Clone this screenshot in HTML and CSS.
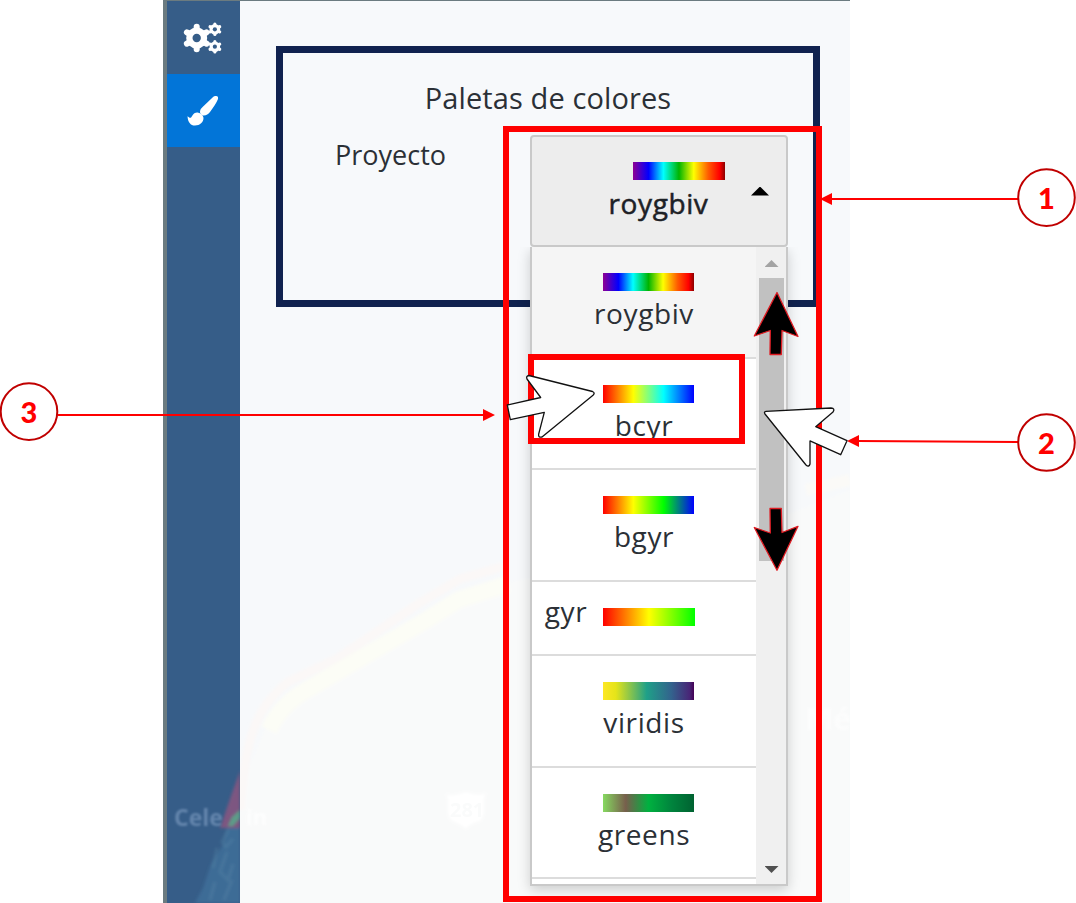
FILE: index.html
```html
<!DOCTYPE html>
<html lang="es">
<head>
<meta charset="utf-8">
<title>Paletas de colores</title>
<link rel="stylesheet" href="styles.css">
</head>
<body>
<main class="app">
  <nav class="sidebar">
    <svg class="side-map" viewBox="0 0 73 163">
      <defs><filter id="soft"><feGaussianBlur stdDeviation="1.5"/></filter></defs>
      <g filter="url(#soft)">
        <path d="M73 86 60 88 56 105 44 124 36 148 28 163H73z" fill="#3e6c96"/>
        <path d="M61 90l-6 12 4 5 7-8M50 108l-4 20M60 112l-7 20 8 8 5-16M48 142l-5 18M65 140l-8 20" fill="none" stroke="#5589aa" stroke-width="3" opacity=".35"/>
        <path d="M73 31 65 53 53 88H73z" fill="#7d5681"/>
        <path d="M73 70l-8 7-4 9h5l7-8z" fill="#5c9c88"/>
      </g>
      <text class="side-place" x="7" y="86">Cele</text>
    </svg>
    <a class="tool" aria-label="Ajustes">
      <svg width="42" height="34" viewBox="0 0 40 32">
        <g fill="#fff">
          <circle cx="14" cy="16" r="10"/>
          <g stroke="#fff" stroke-width="5.8" stroke-linecap="round"><path d="M14 5.3v21.4M4.7 10.6l18.6 10.8M4.7 21.4l18.6-10.8"/></g>
          <circle cx="31.3" cy="7.7" r="5"/>
          <g stroke="#fff" stroke-width="3" stroke-linecap="round"><path d="M31.3 2.7v10M26.7 5.3l9.2 4.8M26.7 10.1l9.2-4.8"/></g>
          <circle cx="31.3" cy="24.3" r="5"/>
          <g stroke="#fff" stroke-width="3" stroke-linecap="round"><path d="M31.3 19.3v10M26.7 21.9l9.2 4.8M26.7 26.7l9.2-4.8"/></g>
        </g>
        <g fill="#365d88"><circle cx="14" cy="16" r="4"/><circle cx="31.3" cy="7.7" r="2"/><circle cx="31.3" cy="24.3" r="2"/></g>
      </svg>
    </a>
    <a class="tool tool-active" aria-label="Paletas">
      <svg width="32" height="32" viewBox="0 0 32 32">
        <g fill="#fff">
          <path d="M29 1c2 0 2.500 1.700 1.800 3.500C29.500 8 26 13 23 17c-1.800 2.300-3.500 3.500-6.200 3.500-2.300 0-4.200-2-3.700-4.500.3-1.700 1.200-2.600 2.500-3.900L25.300 2.700C26.800 1.300 27.800 1 29 1z"/>
          <path d="M10.500 17.500c2 .2 6 2.700 6 5.500 0 4.200-3.600 7.500-8.500 7.500C3.500 30.500.8 27 .5 21.200c1.300 1 2.500 2.300 3.600 1.300 1.600-2 2.700-5.300 6.400-5z"/>
        </g>
      </svg>
    </a>
  </nav>

  <section class="panel">
    <svg class="map" viewBox="0 0 610 903">
      <defs><filter id="haze"><feGaussianBlur stdDeviation="1.5"/></filter></defs>
      <g filter="url(#haze)">
        <path d="M0 903V790L25 730 55 700 130 655 220 597 265 583 470 545 610 490V903z" fill="#f9fafa"/>
        <path d="M0 810C5 740 15 708 48 682L98 658 178 604 220 579 265 566" fill="none" stroke="#fbf8f7" stroke-width="9"/>
        <path d="M29 730C38 710 55 696 70 688L140 647 188 619 218 600 268 584" fill="none" stroke="#fcfdf6" stroke-width="17"/>
        <path d="M566 490 610 480" stroke="#fbfaf7" stroke-width="12"/>
        <path d="M206 794q6 3 20-2 13 5 20 1c-5 9 2 20-6 28-7 2-11 4-14 8-5-5-11-6-15-9-6-8 0-18-5-26z" fill="#fff"/>
      </g>
      <text class="place" x="6" y="825">in</text>
      <text class="place place-big" x="565" y="730">Mé</text>
      <text class="shield" x="210" y="817">281</text>
    </svg>
    <div class="card">
      <h1 class="title">Paletas de colores</h1>
      <div class="field">
        <span class="field-label">Proyecto</span>
        <div class="select">
          <div class="select-box">
            <i class="ramp roygbiv"></i>
            <span class="label">roygbiv</span>
            <i class="caret"></i>
          </div>
          <div class="menu">
            <ul class="options">
              <li class="option option-first"><i class="ramp roygbiv"></i><span class="label">roygbiv</span></li>
              <li class="option"><i class="ramp bcyr"></i><span class="label">bcyr</span></li>
              <li class="option option-tall"><i class="ramp bgyr"></i><span class="label">bgyr</span></li>
              <li class="option option-inline"><span class="label">gyr</span><i class="ramp gyr"></i></li>
              <li class="option option-tall"><i class="ramp viridis"></i><span class="label">viridis</span></li>
              <li class="option"><i class="ramp greens"></i><span class="label">greens</span></li>
            </ul>
            <div class="scrollbar"><i class="up"></i><div class="thumb"></div><i class="down"></i></div>
          </div>
        </div>
      </div>
    </div>
  </section>
</main>

<svg class="notes" width="1076" height="903" viewBox="0 0 1076 903">
  <g fill="none" stroke="#f00" stroke-width="6">
    <rect x="506" y="129" width="313" height="770"/>
    <rect x="531" y="357" width="211" height="84"/>
  </g>
  <g stroke="#f00" stroke-width="2"><path d="M830 199H1018M858 441L1018 442M58 415H484"/></g>
  <g fill="#f00"><path d="M820 199l12-6v12zM847 441l12-6v12zM495 415l-12-6v12z"/></g>
  <g fill="#000" stroke="#e01b22" stroke-width="1.300" stroke-linejoin="round">
    <path d="M777 292.500 798 336.500 782 330.500 781.300 354.500H770L770.300 330.500 754.300 336z"/>
    <path d="M770 508.500H781.300L782 532.500 798 526.300 777 570.300 754.300 527.500 770.300 533z"/>
  </g>
  <g fill="#fff" stroke="#111" stroke-width="1.300" stroke-linejoin="round">
    <path d="M592.500 391.500Q595.500 393 593 395.200L542 437Q538 438 538.700 434L544.300 412.300 510.300 419.700 507.300 405 540.700 397.500 527 379Q525.800 376 529 375.500z"/>
    <path d="M766 411.300 831 408Q835.500 408.500 833 412L815.700 426.700 847 440.700 840.700 454.700 810 440.900V464Q809 467.500 806 465L765 414Q763.500 412 766 411.300z"/>
  </g>
  <g fill="#fff" stroke="#c00000" stroke-width="2">
    <circle cx="1046.500" cy="197.600" r="28.300"/><circle cx="1046.500" cy="442.500" r="28.300"/><circle cx="29" cy="411.600" r="28.300"/>
  </g>
  <g class="num"><text x="1046.500" y="208.500">1</text><text x="1046.500" y="453.500">2</text><text x="29" y="422.500">3</text></g>
</svg>
</body>
</html>
```

FILE: styles.css
```css
* { box-sizing: border-box; }
body {
  margin: 0;
  position: relative;
  width: 1076px;
  height: 903px;
  overflow: hidden;
  background: #fff;
  color: #2b3036;
  font-family: "Open Sans", "Noto Sans", sans-serif;
}
.app {
  display: flex;
  width: 687px;
  height: 903px;
  margin-left: 163px;
  border-left: 4px solid #6b7b80;
  border-top: 1px solid #6b7b80;
}
.sidebar {
  position: relative;
  width: 73px;
  background: #365d88;
}
.side-map {
  position: absolute;
  left: 0;
  bottom: 0;
  width: 73px;
  height: 163px;
}
.side-place { font: 700 23px "Open Sans", sans-serif; fill: #7090b6; opacity: .8; filter: blur(.8px); }
.tool {
  display: flex;
  align-items: center;
  justify-content: center;
  height: 73px;
  padding-right: 2px;
}
.tool-active { background: #0275d8; }
.panel {
  position: relative;
  flex: 1;
  padding: 45px 30px 0 36px;
  background: #f7f9fb;
}
.map {
  position: absolute;
  left: 0;
  top: -1px;
  width: 610px;
  height: 903px;
}
.place { font: 700 22px "Open Sans", sans-serif; fill: #fff; opacity: .7; filter: blur(.8px); }
.place-big { font-size: 30px; opacity: .5; }
.shield { font: 700 20px "Open Sans", sans-serif; fill: #fafbfb; filter: blur(.6px); }
.card {
  position: relative;
  width: 544px;
  height: 261px;
  border: 7px solid #10224f;
  background: #f7f9fb;
}
.title {
  margin: 0;
  padding-top: 25px;
  font-size: 29px;
  font-weight: 400;
  line-height: 40px;
  letter-spacing: .1px;
  text-align: center;
}
.field {
  display: flex;
  justify-content: space-between;
  margin-top: 17px;
  padding-left: 52px;
  padding-right: 25px;
}
.field-label {
  padding-top: 2px;
  font-size: 27px;
  line-height: 36px;
}
.select { width: 258px; }
.select-box {
  display: grid;
  grid-template-columns: 1fr 19px;
  grid-template-rows: 18px 38px;
  row-gap: 4px;
  height: 112px;
  padding: 25px 16px 0 0;
  border: 2px solid #c9c9c9;
  border-radius: 4px;
  background: #ededed;
}
.select-box .ramp { margin-left: 101px; }
.select-box .label {
  padding-left: 34px;
  color: #1d2126;
  -webkit-text-stroke: .5px #1d2126;
}
.caret {
  grid-column: 2;
  grid-row: 1 / 3;
  align-self: center;
  width: 18px;
  height: 9px;
  margin-bottom: 2px;
  background: #000;
  clip-path: polygon(50% 0, 100% 100%, 0 100%);
}
.ramp {
  display: block;
  width: 91.500px;
  height: 18px;
}
.label {
  font-size: 28px;
  line-height: 38px;
  text-align: center;
  letter-spacing: .6px;
}
.menu {
  display: flex;
  height: 639px;
  border: solid #c9c9c9;
  border-width: 0 2px 2px;
  background: #fff;
  box-shadow: 0 4px 12px rgba(0, 0, 0, .18);
  clip-path: inset(0 -20px -20px -20px);
}
.options {
  width: 224px;
  margin: 0;
  padding: 0;
  list-style: none;
}
.option {
  display: flex;
  flex-direction: column;
  align-items: center;
  gap: 3px;
  height: 111px;
  padding-top: 26px;
  border-bottom: 2px solid #dcdcdc;
}
.option .ramp { margin-left: 9px; }
.option-first { height: 112px; background: #f5f5f5; }
.option-tall { height: 112px; }
.option-inline {
  flex-direction: row;
  align-items: flex-start;
  gap: 0;
  height: 74px;
  padding-left: 12px;
}
.option-inline .label { width: 44px; margin-top: -16px; }
.option-inline .ramp { margin-left: 15px; }
.scrollbar {
  display: flex;
  flex-direction: column;
  flex: 1;
  align-items: center;
  padding: 13px 0 11px 1px;
  background: #f0f0f0;
}
.thumb { width: 25px; height: 283px; margin: 11px 0 auto; background: #c1c1c1; }
.up, .down { width: 14px; height: 7px; }
.up { background: #a3a3a3; clip-path: polygon(50% 0, 100% 100%, 0 100%); }
.down { background: #505050; clip-path: polygon(0 0, 100% 0, 50% 100%); }

.roygbiv { background: linear-gradient(90deg, #8e0094, #0000ff 17%, #00ffff 33%, #00b400 50%, #ffff00 66%, #ff5a00 82%, #ff0000 94%, #8b0000); }
.bcyr { background: linear-gradient(90deg, #ff0000, #ffff00 33.300%, #00ffff 66.600%, #0000ff); }
.bgyr { background: linear-gradient(90deg, #ff0000, #ffff00 33.300%, #00ff00 66.600%, #0000ff); }
.gyr { background: linear-gradient(90deg, #ff0000, #ffff00 50%, #00ff00); }
.viridis { background: linear-gradient(90deg, #fde725, #e5e419 14%, #1fa088 48%, #33638d 75%, #482677 95%, #440154); }
.greens { background: linear-gradient(90deg, #86d960, #775f4c 25%, #00b140 50%, #00843d 75%, #006231); }

.notes {
  position: absolute;
  left: 0;
  top: 0;
}
.num text {
  font: 900 29px Lato, sans-serif;
  text-anchor: middle;
  fill: #f00;
}
```
